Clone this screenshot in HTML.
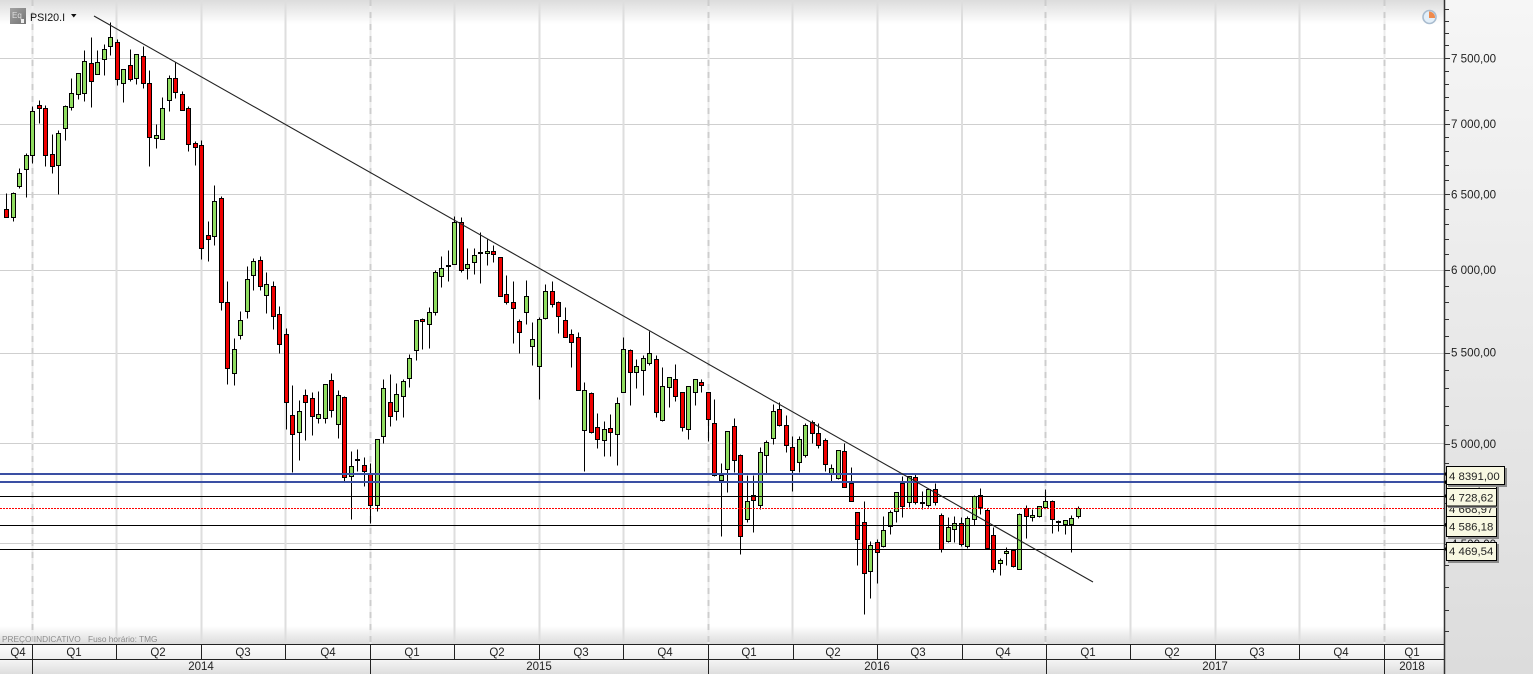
<!DOCTYPE html>
<html><head><meta charset="utf-8"><title>PSI20.I</title>
<style>
html,body{margin:0;padding:0;width:1533px;height:674px;overflow:hidden;background:#fff}
svg{display:block}
text{font-family:"Liberation Sans",sans-serif;fill:#222}
</style></head><body>
<svg width="1533" height="674" viewBox="0 0 1533 674" xmlns="http://www.w3.org/2000/svg">
<defs>
<linearGradient id="t" x1="0" y1="0" x2="0" y2="1"><stop offset="0" stop-color="#dcdcdc"/><stop offset="1" stop-color="#fff"/></linearGradient>
<linearGradient id="b" x1="0" y1="0" x2="0" y2="1"><stop offset="0" stop-color="#fff"/><stop offset="1" stop-color="#dcdcdc"/></linearGradient>
<linearGradient id="q" x1="0" y1="0" x2="0" y2="1"><stop offset="0" stop-color="#fdfdfd"/><stop offset="1" stop-color="#efefef"/></linearGradient>
<linearGradient id="y" x1="0" y1="0" x2="0" y2="1"><stop offset="0" stop-color="#f6f6f6"/><stop offset="1" stop-color="#dedede"/></linearGradient>
<linearGradient id="a" x1="0" y1="0" x2="0" y2="1"><stop offset="0" stop-color="#f6f6f6"/><stop offset="1" stop-color="#dcdcdc"/></linearGradient>
<linearGradient id="ic" x1="0" y1="0" x2="1" y2="1"><stop offset="0" stop-color="#a2a2a2"/><stop offset="1" stop-color="#747474"/></linearGradient>
</defs>
<rect width="1533" height="674" fill="#fff"/>
<rect x="1445" y="0" width="88" height="674" fill="url(#a)"/>
<rect x="0" y="0" width="1444" height="24" fill="url(#t)"/>
<rect x="0" y="626" width="1444" height="18" fill="url(#b)"/>

<!-- grid -->
<g stroke="#cfcfcf" stroke-width="1" fill="none">
<path d="M0 58.5H1444M0 124.5H1444M0 194.5H1444M0 270.5H1444M0 353.5H1444M0 443.5H1444M0 543.5H1444"/>
</g>
<g stroke="#dedede" stroke-width="2" fill="none">
<path d="M116.5 0V644M201.5 0V644M285.5 0V644M454.5 0V644M539.5 0V644M623.5 0V644M792.5 0V644M877.5 0V644M962 0V644M1130.5 0V644M1215.5 0V644M1299.5 0V644"/>
</g>
<g stroke="#ececec" stroke-width="2" fill="none"><path d="M32.5 0V644M370.5 0V644M708.5 0V644M1045.5 0V644M1384.5 0V644"/></g>
<g stroke="#cdcdcd" stroke-width="2" stroke-dasharray="6 6" fill="none"><path d="M32.5 0V644M370.5 0V644M708.5 0V644M1045.5 0V644M1384.5 0V644"/></g>

<!-- candles -->
<g transform="translate(.5 .5)" stroke="#000" stroke-width="1">
<path fill="none" d="M13 192V221M19 168V188M26 153V197M32 106V163M58 130V194M65 105V140M71 78V110M78 73V99M84 50V101M97 50V74M104 44V75M110 22V55M123 69V102M136 54V84M156 124V148M162 97V139M169 75V111M214 185V245M234 338V385M240 311V339M247 266V318M253 258V290M266 272V313M299 400V460M318 391V423M325 384V423M338 390V438M351 451V519M377 439V511M383 379V443M396 383V420M403 379V417M409 354V387M416 320V360M429 307V348M435 270V315M441 256V287M454 216V264M467 248V279M474 248V274M487 239V265M526 280V324M532 322V365M539 317V399M545 284V319M584 382V471M604 421V456M617 397V465M623 337V392M636 359V388M643 355V395M649 331V365M662 367V421M669 377V407M688 386V439M695 379V405M721 463V536M727 431V492M747 475V522M760 447V509M766 440V473M773 404V444M799 436V472M805 423V457M831 464V481M838 450V479M870 541V598M883 516V547M890 510V534M896 492V522M909 476V507M928 488V507M948 517V542M954 516V542M967 516V548M974 495V525M1000 558V575M1006 547V565M1019 513V569M1032 509V521M1039 506V517M1045 489V507M1065 520V534M1071 515V552M1078 506V518M6 193V217M39 100V123M45 105V166M52 134V173M91 37V107M117 39V85M130 49V81M143 46V88M149 70V166M175 62V98M182 91V110M188 106V151M195 141V165M201 140V259M208 221V261M221 196V310M227 281V384M260 256V290M273 281V329M279 306V353M286 328V429M292 385V472M305 389V440M312 392V435M331 373V417M344 396V481M364 457V486M370 463V523M390 374V426M422 318V349M461 217V272M493 245V262M500 257V296M506 275V304M513 281V343M519 319V353M552 281V307M558 301V333M565 307V337M571 329V367M578 332V390M591 392V433M597 413V448M610 414V456M630 349V405M656 355V417M675 364V401M682 392V431M701 379V392M708 392V441M714 399V476M734 418V472M740 454V554M753 475V532M779 402V426M786 415V452M792 436V491M812 420V443M818 423V448M825 438V471M844 443V487M851 467V501M857 512V565M864 501V614M877 539V583M902 476V517M915 474V504M935 483V505M941 513V552M961 517V546M980 488V514M987 508V549M993 527V572M1013 549V567M1026 505V538M1052 500V533M357 449V471M448 250V281M480 232V283M922 491V509M1058 520V531"/>
<path fill="#90dd60" d="M11 193h4v24h-4zM17 173h4v13h-4zM24 155h4v14h-4zM30 111h4v44h-4zM56 133h4v32h-4zM63 106h4v22h-4zM69 93h4v14h-4zM76 73h4v21h-4zM82 61h4v32h-4zM95 62h4v12h-4zM102 49h4v10h-4zM108 37h4v9h-4zM121 69h4v14h-4zM134 54h4v24h-4zM154 135h4v3h-4zM160 108h4v31h-4zM167 78h4v22h-4zM212 201h4v35h-4zM232 349h4v24h-4zM238 320h4v15h-4zM245 279h4v32h-4zM251 261h4v14h-4zM264 284h4v11h-4zM297 411h4v21h-4zM316 414h4v4h-4zM323 384h4v34h-4zM336 395h4v29h-4zM349 466h4v10h-4zM375 439h4v66h-4zM381 388h4v48h-4zM394 394h4v17h-4zM401 381h4v15h-4zM407 358h4v20h-4zM414 320h4v30h-4zM427 312h4v12h-4zM433 272h4v40h-4zM439 268h4v8h-4zM452 222h4v42h-4zM465 264h4v4h-4zM472 255h4v7h-4zM485 251h4v2h-4zM524 296h4v16h-4zM530 339h4v7h-4zM537 319h4v47h-4zM543 291h4v27h-4zM582 390h4v40h-4zM602 429h4v11h-4zM615 403h4v31h-4zM621 349h4v43h-4zM634 366h4v6h-4zM641 358h4v12h-4zM647 353h4v10h-4zM660 386h4v34h-4zM667 377h4v10h-4zM686 386h4v43h-4zM693 379h4v13h-4zM719 475h4v5h-4zM725 431h4v38h-4zM745 501h4v18h-4zM758 452h4v53h-4zM764 442h4v13h-4zM771 411h4v27h-4zM797 439h4v23h-4zM803 425h4v30h-4zM829 468h4v5h-4zM836 450h4v28h-4zM868 545h4v26h-4zM881 530h4v16h-4zM888 512h4v14h-4zM894 492h4v19h-4zM907 476h4v26h-4zM926 489h4v16h-4zM946 527h4v14h-4zM952 523h4v6h-4zM965 518h4v28h-4zM972 496h4v23h-4zM998 560h4v3h-4zM1004 551h4v2h-4zM1017 514h4v55h-4zM1030 515h4v2h-4zM1037 506h4v10h-4zM1043 501h4v6h-4zM1063 520h4v4h-4zM1069 518h4v6h-4zM1076 508h4v8h-4z"/>
<path fill="#f00000" d="M4 209h4v8h-4zM37 105h4v3h-4zM43 108h4v47h-4zM50 154h4v12h-4zM89 63h4v18h-4zM115 42h4v37h-4zM128 65h4v14h-4zM141 56h4v27h-4zM147 83h4v54h-4zM173 78h4v14h-4zM180 94h4v16h-4zM186 108h4v36h-4zM193 143h4v4h-4zM199 145h4v103h-4zM206 235h4v4h-4zM219 198h4v104h-4zM225 302h4v66h-4zM258 260h4v26h-4zM271 286h4v30h-4zM277 314h4v30h-4zM284 334h4v68h-4zM290 415h4v19h-4zM303 395h4v7h-4zM310 398h4v18h-4zM329 380h4v30h-4zM342 397h4v80h-4zM362 465h4v6h-4zM368 474h4v31h-4zM388 402h4v14h-4zM420 319h4v2h-4zM459 222h4v48h-4zM491 251h4v3h-4zM498 257h4v39h-4zM504 294h4v8h-4zM511 302h4v6h-4zM517 321h4v11h-4zM550 291h4v13h-4zM556 302h4v14h-4zM563 320h4v17h-4zM569 334h4v8h-4zM576 337h4v53h-4zM589 393h4v39h-4zM595 427h4v12h-4zM608 428h4v4h-4zM628 350h4v22h-4zM654 359h4v53h-4zM673 379h4v17h-4zM680 392h4v35h-4zM699 382h4v3h-4zM706 392h4v27h-4zM712 423h4v52h-4zM732 426h4v34h-4zM738 455h4v81h-4zM751 495h4v5h-4zM777 409h4v16h-4zM784 425h4v20h-4zM790 447h4v23h-4zM810 422h4v11h-4zM816 433h4v12h-4zM823 440h4v24h-4zM842 451h4v36h-4zM849 483h4v18h-4zM855 512h4v27h-4zM862 522h4v51h-4zM875 542h4v10h-4zM900 483h4v23h-4zM913 477h4v25h-4zM933 489h4v13h-4zM939 515h4v34h-4zM959 523h4v21h-4zM978 495h4v12h-4zM985 510h4v38h-4zM991 535h4v34h-4zM1011 550h4v16h-4zM1024 508h4v8h-4zM1050 501h4v18h-4z"/>
<path fill="#000" d="M355 459h4v1h-4zM446 265h4v1h-4zM478 252h4v1h-4zM920 502h4v1h-4zM1056 521h4v1h-4z"/>
</g>

<!-- horizontal levels -->
<path d="M0 474H1444M0 482H1444" stroke="#3a4fa3" stroke-width="2" fill="none"/>
<path d="M0 496.5H1444M0 525.5H1444M0 549.5H1444" stroke="#000" stroke-width="1" fill="none"/>
<path d="M0 508.5H1444" stroke="#f00" stroke-width="1" stroke-dasharray="2 1" fill="none"/>
<!-- trend line -->
<path d="M94 16L1093 582" stroke="#222" stroke-width="1.1" fill="none"/>

<!-- bottom axis -->
<rect x="0" y="644" width="1445" height="15" fill="url(#q)"/>
<rect x="0" y="659" width="1445" height="15" fill="url(#y)"/>
<path d="M0 644.5H1445M0 659.5H1445" stroke="#222" stroke-width="1" fill="none"/>
<path d="M32.5 644V674M116.5 644V659M201.5 644V659M285.5 644V659M370.5 644V674M454.5 644V659M539.5 644V659M623.5 644V659M708.5 644V674M793.5 644V659M877.5 644V659M962.5 644V659M1046.5 644V674M1130.5 644V659M1215.5 644V659M1299.5 644V659M1384.5 644V674" stroke="#222" stroke-width="1" fill="none"/>
<g font-size="11.5" text-anchor="middle">
<text x="18" y="656">Q4</text><text x="74" y="656">Q1</text><text x="158" y="656">Q2</text><text x="243" y="656">Q3</text><text x="328" y="656">Q4</text><text x="412" y="656">Q1</text><text x="497" y="656">Q2</text><text x="581" y="656">Q3</text><text x="665" y="656">Q4</text><text x="749" y="656">Q1</text><text x="833" y="656">Q2</text><text x="918" y="656">Q3</text><text x="1003" y="656">Q4</text><text x="1088" y="656">Q1</text><text x="1172" y="656">Q2</text><text x="1257" y="656">Q3</text><text x="1341" y="656">Q4</text><text x="1412" y="656">Q1</text>
<text x="201" y="670">2014</text><text x="539" y="670">2015</text><text x="877" y="670">2016</text><text x="1215" y="670">2017</text><text x="1412" y="670">2018</text>
</g>
<g font-size="8.3"><text x="2" y="642" style="fill:#8c8c8c">PREÇO INDICATIVO</text><text x="88" y="642" style="fill:#8c8c8c">Fuso horário: TMG</text></g>

<!-- right axis -->
<path d="M1444.5 0V674" stroke="#333" stroke-width="1.5" fill="none"/>
<path d="M1445 9h4M1445 21h4M1445 33h4M1445 45h4M1445 71h4M1445 84h4M1445 97h4M1445 110h4M1445 137h4M1445 151h4M1445 165h4M1445 180h4M1445 209h4M1445 224h4M1445 239h4M1445 254h4M1445 286h4M1445 302h4M1445 319h4M1445 336h4M1445 370h4M1445 388h4M1445 406h4M1445 425h4M1445 463h4M1445 483h4M1445 503h4M1445 523h4M1445 565h4M1445 587h4M1445 610h4M1445 631h4" stroke="#333" stroke-width="1" fill="none" transform="translate(0 .5)"/>
<path d="M1445 58h5M1445 124h5M1445 194h5M1445 270h5M1445 353h5M1445 444h5M1445 544h5" stroke="#333" stroke-width="1" fill="none" transform="translate(0 .5)"/>
<g font-size="11.6">
<text x="1451" y="62.500">7 500,00</text><text x="1451" y="128">7 000,00</text><text x="1451" y="198.500">6 500,00</text><text x="1451" y="274">6 000,00</text><text x="1451" y="356.500">5 500,00</text><text x="1451" y="448">5 000,00</text><text x="1451" y="548">4 500,00</text>
</g>

<!-- price tags -->
<g font-size="11.4">
<rect x="1448" y="475" width="51" height="19" fill="#8a8a8a"/><rect x="1446.500" y="473.500" width="50" height="18" fill="#f8f8e2" stroke="#000"/><text x="1449" y="486.500">4 805,00</text>
<rect x="1448" y="503" width="51" height="19" fill="#8a8a8a"/><rect x="1446.500" y="501.500" width="50" height="18" fill="#f8f8e2" stroke="#000"/><text x="1449" y="513">4 668,97</text>
<rect x="1448" y="490" width="51" height="18" fill="#8a8a8a"/><rect x="1446.500" y="488.500" width="50" height="17.500" fill="#f8f8e2" stroke="#000"/><text x="1449" y="501.500">4 728,62</text>
<rect x="1448" y="518" width="51" height="21" fill="#8a8a8a"/><rect x="1446.500" y="516.500" width="50" height="20" fill="#f8f8e2" stroke="#000"/><text x="1449" y="530.500">4 586,18</text>
<rect x="1448" y="544" width="51" height="19" fill="#8a8a8a"/><rect x="1446.500" y="542.500" width="50" height="18" fill="#f8f8e2" stroke="#000"/><text x="1449" y="555">4 469,54</text>
<rect x="1448" y="468" width="59" height="19" fill="#8a8a8a"/><rect x="1446.500" y="466.500" width="58" height="18" fill="#f8f8e2" stroke="#000"/><text x="1449" y="480">4 8391,00</text>
</g>
<path d="M1444 474l3-3v6zM1444 482l3-3v6zM1444 496l3-3v6zM1444 525l3-3v6zM1444 549l3-3v6z" fill="#000"/>

<!-- top-left -->
<rect x="10" y="8" width="16" height="16" fill="url(#ic)"/>
<text x="12" y="18" font-size="8" style="fill:#ddd">Eq</text>
<rect x="21" y="19" width="3" height="4" fill="#eee"/>
<text x="30" y="21" font-size="10.7" style="fill:#111">PSI20.I</text>
<path d="M71 14h5.500l-2.750 3.500z" fill="#111"/>

<!-- clock icon -->
<circle cx="1429.500" cy="17" r="6.500" fill="#e3eff9" stroke="#a9bccf" stroke-width="1.600"/>
<path d="M1429 18V11.500A6 6 0 0 1 1435 18z" fill="#ef8a4c"/>
</svg>
</body></html>
